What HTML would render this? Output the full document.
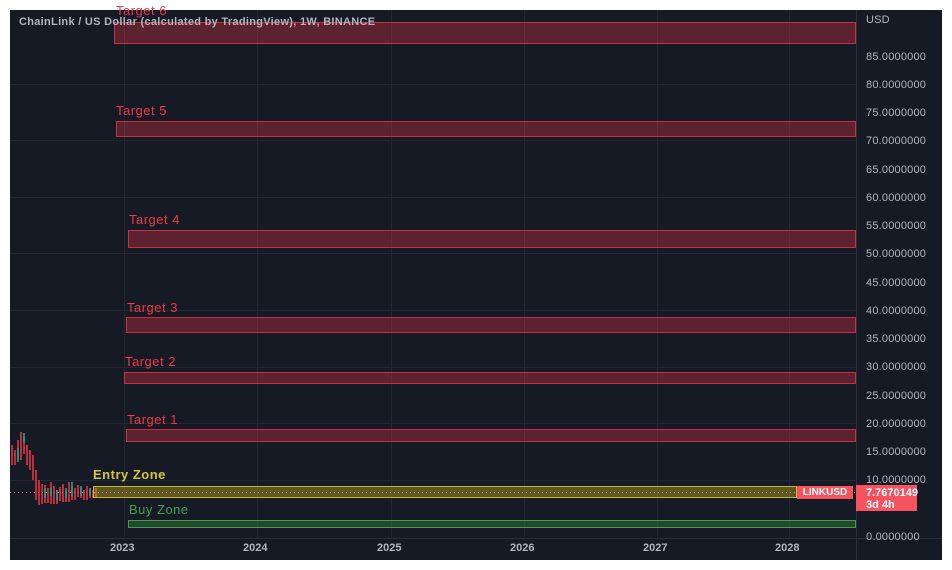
<!DOCTYPE html><html><head><style>
body{margin:0;width:952px;height:570px;background:#fff;position:relative;overflow:hidden;font-family:"Liberation Sans",sans-serif}
#c{position:absolute;left:10px;top:10px;width:932px;height:550px;background:#161a25}
.b{position:absolute;box-sizing:border-box}
.r{background:rgba(242,54,69,.32);border:1px solid #c8303f;right:96px}
.l{position:absolute;font-size:13px;color:#f23645;letter-spacing:.5px}
.ax{position:absolute;left:866px;font-size:11px;color:#b2b5be;letter-spacing:.2px}
.yr{position:absolute;top:542px;font-size:11px;font-weight:bold;color:#b2b5be}
</style></head><body><div id="c"></div>
<svg style="position:absolute;left:0;top:0" width="952" height="570">
<g stroke="#232733" stroke-width="1">
<line x1="124.5" y1="10" x2="124.5" y2="538"/><line x1="257.5" y1="10" x2="257.5" y2="538"/><line x1="391.5" y1="10" x2="391.5" y2="538"/><line x1="524.5" y1="10" x2="524.5" y2="538"/><line x1="657.5" y1="10" x2="657.5" y2="538"/><line x1="789.5" y1="10" x2="789.5" y2="538"/>
<line x1="10" y1="84.5" x2="856" y2="84.5"/><line x1="10" y1="197.5" x2="856" y2="197.5"/><line x1="10" y1="310.5" x2="856" y2="310.5"/><line x1="10" y1="423.5" x2="856" y2="423.5"/><line x1="10" y1="140.5" x2="856" y2="140.5"/><line x1="10" y1="253.5" x2="856" y2="253.5"/><line x1="10" y1="367.5" x2="856" y2="367.5"/><line x1="10" y1="480.5" x2="856" y2="480.5"/>
</g>
<line x1="856.5" y1="10" x2="856.5" y2="560" stroke="#2a2e39"/><line x1="10" y1="538.5" x2="942" y2="538.5" stroke="#2a2e39"/>
<line x1="10" y1="492.5" x2="856" y2="492.5" stroke="#f7525f" stroke-dasharray="1,3"/>
<g stroke-width="1.5">
<path d="M12 445v20M15 450v15M18 440v20M21 432v28M24 436v18M27 445v20M30 450v20M33 455v25M36 470v30M39 480v25M42 484v20M45 485v18M48 488v15M51 482v22M54 486v18M57 490v14M60 487v14M63 484v18M66 490v12M69 482v20M72 486v14M75 488v12M78 485v12M81 488v10M84 490v10M87 486v14M90 488v10M93 490v8M96 488v10" stroke="#f23645"/>
<path d="M18 448v14M24 433v10M45 488v10M51 488v8M57 490v10M66 488v10M72 482v14M81 486v10M90 488v8" stroke="#26a69a"/>
</g></svg>
<div class="b r" style="left:114px;top:22px;height:22px"></div>
<div class="b r" style="left:116px;top:121px;height:16px"></div>
<div class="b r" style="left:128px;top:230px;height:18px"></div>
<div class="b r" style="left:126px;top:317px;height:16px"></div>
<div class="b r" style="left:124px;top:372px;height:12px"></div>
<div class="b r" style="left:126px;top:429px;height:13px"></div>
<div class="b" style="left:93px;top:486px;width:704px;height:12px;background:rgba(200,180,40,.4);border:1px solid #c7b92e"></div>
<div class="b" style="left:128px;top:520px;width:728px;height:8px;background:rgba(60,140,60,.4);border:1px solid #3fa34d"></div>
<div class="l" style="left:116px;top:3px">Target 6</div>
<div class="l" style="left:116px;top:103px">Target 5</div>
<div class="l" style="left:129px;top:212px">Target 4</div>
<div class="l" style="left:127px;top:300px">Target 3</div>
<div class="l" style="left:125px;top:354px">Target 2</div>
<div class="l" style="left:127px;top:412px">Target 1</div>
<div class="l" style="left:93px;top:467px;color:#d4c63a;font-weight:bold">Entry Zone</div>
<div class="l" style="left:129px;top:502px;color:#3fa34d">Buy Zone</div>
<div style="position:absolute;left:19px;top:16px;font-size:11px;color:#b2b5be;font-weight:bold;letter-spacing:.3px">ChainLink / US Dollar (calculated by TradingView), 1W, BINANCE</div>
<div class="ax" style="top:14px">USD</div>
<div class="ax" style="top:51px">85.0000000</div><div class="ax" style="top:79px">80.0000000</div><div class="ax" style="top:107px">75.0000000</div><div class="ax" style="top:135px">70.0000000</div><div class="ax" style="top:164px">65.0000000</div><div class="ax" style="top:192px">60.0000000</div><div class="ax" style="top:220px">55.0000000</div><div class="ax" style="top:248px">50.0000000</div><div class="ax" style="top:277px">45.0000000</div><div class="ax" style="top:305px">40.0000000</div><div class="ax" style="top:333px">35.0000000</div><div class="ax" style="top:361px">30.0000000</div><div class="ax" style="top:390px">25.0000000</div><div class="ax" style="top:418px">20.0000000</div><div class="ax" style="top:446px">15.0000000</div><div class="ax" style="top:474px">10.0000000</div><div class="ax" style="top:531px">0.0000000</div>
<div style="position:absolute;left:797px;top:486px;width:56px;height:13px;background:#f7525f;color:#fff;font-size:10px;font-weight:bold;text-align:center;line-height:13px">LINKUSD</div>
<div style="position:absolute;left:856px;top:485px;width:61px;height:26px;background:#f7525f;color:#fff;font-size:11px;line-height:12px;padding:2px 0 0 10px;box-sizing:border-box;font-weight:bold">7.7670149<br>3d 4h</div>
<div class="yr" style="left:110px">2023</div><div class="yr" style="left:243px">2024</div><div class="yr" style="left:377px">2025</div><div class="yr" style="left:510px">2026</div><div class="yr" style="left:643px">2027</div><div class="yr" style="left:775px">2028</div>
</body></html>
